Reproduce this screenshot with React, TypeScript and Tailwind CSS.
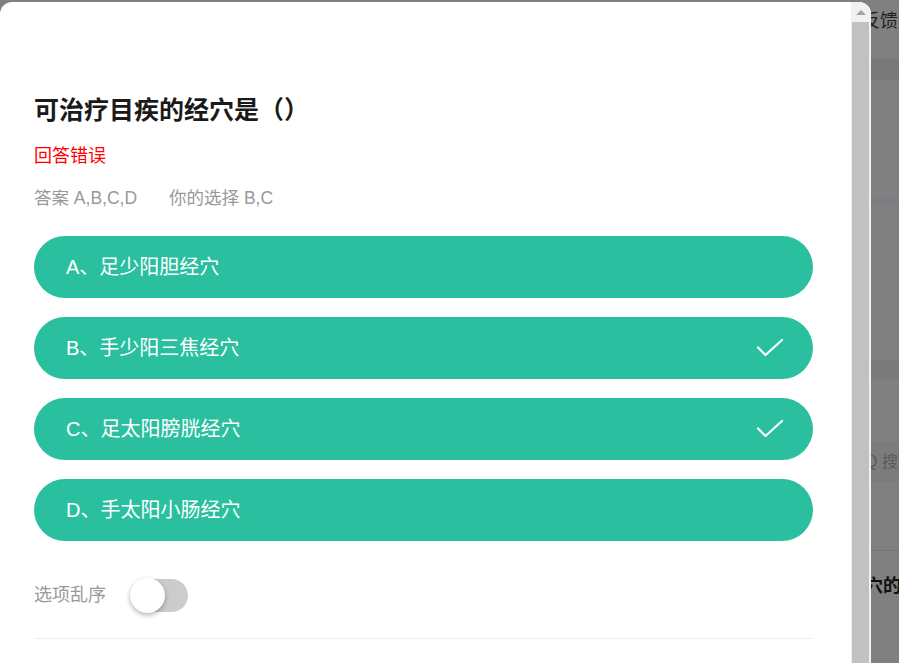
const options = [
  { label: "A、足少阳胆经穴", picked: false },
  { label: "B、手少阳三焦经穴", picked: true },
  { label: "C、足太阳膀胱经穴", picked: true },
  { label: "D、手太阳小肠经穴", picked: false },
];

function Check() {
  return (
    <svg width="28" height="20" viewBox="0 0 28 20" fill="none">
      <path d="M2 9.5 L9.5 17 L26 2" stroke="white" strokeWidth="2.2" strokeLinecap="round" strokeLinejoin="round" />
    </svg>
  );
}

export default function App() {
  return (
    <div
      className="w-[899px] h-[663px] overflow-hidden bg-[#808080] flex"
      style={{ fontFamily: '"Liberation Sans", "Noto Sans CJK SC", sans-serif' }}
    >
      {/* 弹窗 */}
      <div className="relative z-10 w-[871px] h-[661px] mt-[2px] shrink-0 bg-white rounded-t-[12px] overflow-hidden flex">
        <div className="flex-1 pl-[34px] pr-[38px] pt-[93px]">
          <h2 className="text-[25px] leading-[30px] font-bold text-[#1a1a1a]">可治疗目疾的经穴是（）</h2>
          <p className="mt-[19px] text-[18px] leading-[24px] text-[#ff0000]">回答错误</p>
          <div className="mt-[18px] flex gap-[32px] text-[17.5px] leading-[24px] text-[#999999]">
            <span>答案 A,B,C,D</span>
            <span>你的选择 B,C</span>
          </div>
          <div className="mt-[26px] flex flex-col gap-[19px]">
            {options.map((o) => (
              <div
                key={o.label}
                className="h-[62px] rounded-full bg-[#2ac09f] pl-[32px] pr-[29px] flex items-center justify-between text-white text-[20px]"
              >
                <span>{o.label}</span>
                {o.picked && <Check />}
              </div>
            ))}
          </div>
          <div className="mt-[37px] flex items-center h-[35px]">
            <span className="text-[18px] text-[#999999] mr-[24px]">选项乱序</span>
            <div className="relative w-[58px] h-[35px]">
              <div className="absolute left-[2px] top-[1px] w-[56px] h-[33px] rounded-full bg-[#cccccc]" />
              <div className="absolute left-0 top-0 w-[35px] h-[35px] rounded-full bg-white shadow-[0_2px_5px_rgba(0,0,0,0.3)]" />
            </div>
          </div>
          <div className="mt-[25px] h-px bg-[#eeeeee]" />
        </div>
        {/* 滚动条 */}
        <div className="w-[20px] bg-[#f1f1f1] flex flex-col items-start">
          <div className="h-[20px] w-full flex items-center justify-center">
            <div className="w-0 h-0 border-l-[5px] border-r-[5px] border-b-[5px] border-l-transparent border-r-transparent border-b-[#a3a3a3]" />
          </div>
          <div className="ml-[1px] w-[17px] flex-1 bg-[#c1c1c1]" />
        </div>
      </div>

      {/* 背后页面 */}
      <div className="flex-1 relative flex flex-col text-[18px]">
        <div className="h-[58px] relative">
          <span className="absolute left-[-9px] top-[8px] whitespace-nowrap text-[#1f1f1f]">反馈意见</span>
        </div>
        <div className="h-[22px] bg-[#797979]" />
        <div className="h-[118px]" />
        <div className="h-[8px] bg-[#7b7d81]" />
        <div className="h-[154px]" />
        <div className="h-[20px] bg-[#7b7b7b]" />
        <div className="h-[62px]" />
        <div className="h-[40px] bg-[#7c7c7c] flex items-center text-[#5a5a5a] whitespace-nowrap">
          <span className="ml-[-6px] text-[16px]">Q 搜索</span>
        </div>
        <div className="h-[69px] border-b border-[#757575]" />
        <div className="pt-[22px] font-bold text-[#111111] whitespace-nowrap ml-[-6px]">穴的</div>
      </div>
    </div>
  );
}
